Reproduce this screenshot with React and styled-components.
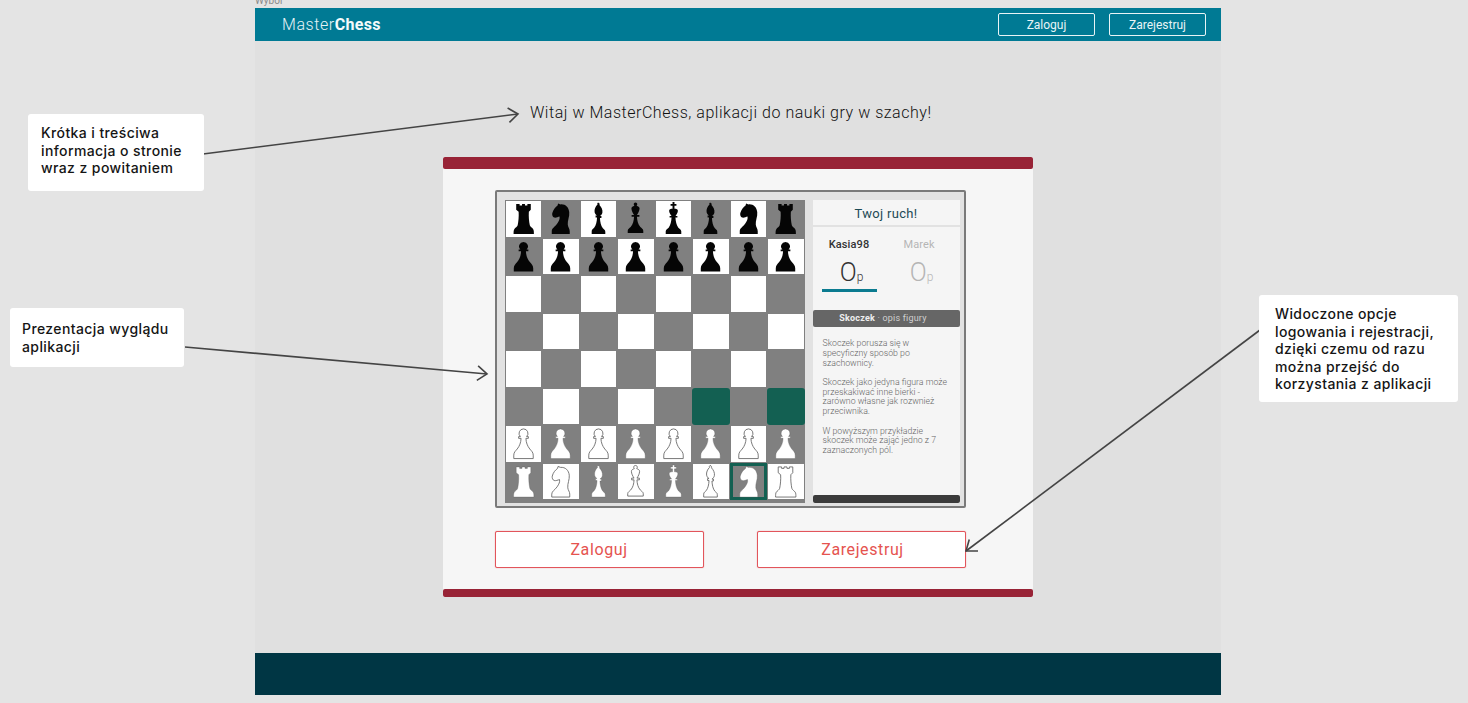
import React from 'react';
import styled, { createGlobalStyle } from 'styled-components';

const GlobalStyle = createGlobalStyle`
  html, body {
    margin: 0;
    padding: 0;
    background: #e4e4e4;
    font-family: Roboto, "Liberation Sans", sans-serif;
    overflow: hidden;
  }
`;

const Page = styled.div`
  position: relative;
  width: 1468px;
  height: 703px;
  padding: 8px 0 0 255px;
  box-sizing: border-box;
  overflow: hidden;
`;

const FrameLabel = styled.div`
  position: absolute;
  left: 255px;
  top: -5px;
  font-size: 10px;
  line-height: 12px;
  color: #8a8a8a;
`;

const Frame = styled.div`
  display: flex;
  flex-direction: column;
  width: 966px;
  height: 687px;
  background: #e0e0e0;
`;

const NavBar = styled.header`
  display: flex;
  align-items: center;
  justify-content: space-between;
  height: 33px;
  padding: 0 15px 0 27px;
  background: #007a94;
`;

const Logo = styled.div`
  font-size: 16px;
  font-weight: 300;
  letter-spacing: 0.55px;
  color: #e6f3f6;

  b {
    font-weight: 700;
    color: #f4fafb;
    letter-spacing: 0.3px;
  }
`;

const NavActions = styled.div`
  display: flex;
  gap: 14px;
`;

const NavButton = styled.button`
  width: 97px;
  height: 23px;
  padding: 0;
  border: 1px solid #e8f4f6;
  border-radius: 2px;
  background: transparent;
  color: #e8f4f6;
  font-family: inherit;
  font-size: 12px;
`;

const Main = styled.main`
  flex: 1;
  display: flex;
  flex-direction: column;
  align-items: center;
`;

const Greeting = styled.h1`
  align-self: flex-start;
  margin: 62px 0 0 275px;
  font-size: 16px;
  line-height: 20px;
  font-weight: 300;
  letter-spacing: 0.53px;
  color: #111;
`;

const Card = styled.section`
  display: flex;
  flex-direction: column;
  align-items: center;
  width: 590px;
  height: 440px;
  margin-top: 34px;
  background: #f6f6f6;
`;

const CardBar = styled.div`
  align-self: stretch;
  height: ${props => props.$height}px;
  border-radius: 2px;
  background: #982336;
`;

const GameWindow = styled.div`
  display: flex;
  gap: 8px;
  width: 471px;
  height: 318px;
  margin: 21px 16px 0 0;
  padding: 8px 4px 3px 8px;
  box-sizing: border-box;
  border: 2px solid #7a7a7a;
  border-radius: 2px;
  background: #e2e2e2;
`;

const Board = styled.div`
  display: grid;
  grid-template-columns: repeat(8, 37.5px);
  grid-template-rows: repeat(8, 37.5px);
  flex: none;
  background: #808080;
`;

const Square = styled.div`
  display: flex;
  align-items: center;
  justify-content: center;
  margin: ${props => (props.$tone === 'light' || props.$tone === 'dark' ? '1px' : '0')};
  box-sizing: border-box;
  border-radius: ${props => (props.$tone === 'target' ? '3px' : '0')};
  border: ${props => (props.$tone === 'selected' ? '3px solid #136052' : 'none')};
  background: ${props => {
    if (props.$tone === 'light') return '#ffffff';
    if (props.$tone === 'target') return '#136052';
    return 'transparent';
  }};
`;

const PieceIcon = styled.svg`
  flex: none;
  width: 35px;
  height: 35px;
  fill: ${props => (props.$white ? '#ffffff' : '#050505')};
  stroke: ${props => (props.$white ? (props.$outlined ? '#666666' : '#5a5a5a') : 'none')};
  stroke-width: ${props => (props.$white ? (props.$outlined ? 0.9 : 0.35) : 0)};
`;

const SidePanel = styled.aside`
  display: flex;
  flex-direction: column;
  width: 147px;
  background: #f5f5f5;
`;

const TurnHeader = styled.div`
  height: 25px;
  border-bottom: 2px solid #e2e2e2;
  font-size: 13px;
  line-height: 27px;
  letter-spacing: 0.3px;
  text-align: center;
  color: #1d4a55;
`;

const Players = styled.div`
  display: flex;
  gap: 15px;
  height: 83px;
  padding: 0 9px;
`;

const Player = styled.div`
  display: flex;
  flex-direction: column;
  align-items: center;
  width: 55px;
  padding-top: 11px;
  color: ${props => (props.$active ? '#333' : '#b5b5b5')};
`;

const PlayerName = styled.div`
  font-size: 11px;
  line-height: 13px;
  letter-spacing: 0.1px;
  font-weight: ${props => (props.$active ? 500 : 400)};
`;

const Score = styled.div`
  height: 31px;
  margin-top: 6px;
  padding-left: 5px;
  font-size: 25px;
  line-height: 31px;
  font-weight: 300;

  small {
    font-size: 12px;
  }
`;

const ScoreLine = styled.div`
  align-self: stretch;
  height: 2.5px;
  margin-top: 1px;
  background: ${props => (props.$active ? '#0b7b90' : 'transparent')};
`;

const InfoHeader = styled.div`
  height: 17px;
  padding-right: 6px;
  border-radius: 2px;
  background: #666666;
  font-size: 9px;
  line-height: 17px;
  letter-spacing: 0.2px;
  text-align: center;
  color: #d0d0d0;

  b {
    font-weight: 700;
    color: #eeeeee;
  }
`;

const InfoBody = styled.div`
  flex: 1;
  padding: 12px 6px 0 10px;
`;

const InfoText = styled.p`
  margin: 0 0 9.5px;
  font-size: 8.75px;
  line-height: 9.8px;
  font-weight: 300;
  color: #666;
`;

const PanelFooter = styled.div`
  height: 8px;
  border-radius: 2px;
  background: #3b3b3b;
`;

const CardActions = styled.div`
  display: flex;
  justify-content: space-between;
  width: 471px;
  margin: 23px 16px 21px 0;
`;

const OutlineButton = styled.button`
  width: 209px;
  height: 37px;
  padding: 0 0 0 ${props => props.$shift || 0}px;
  border: 1px solid #e2555b;
  border-radius: 2px;
  background: #ffffff;
  box-shadow: 0 0 1px rgba(226, 85, 91, 0.8);
  color: #e5534f;
  font-family: inherit;
  font-size: 16px;
  letter-spacing: 0.6px;
`;

const Footer = styled.footer`
  height: 42px;
  background: #003644;
`;

const ArrowLayer = styled.svg`
  position: absolute;
  left: 0;
  top: 0;
  pointer-events: none;
`;

const Note = styled.div`
  position: absolute;
  left: ${props => props.$left}px;
  top: ${props => props.$top}px;
  width: ${props => props.$width}px;
  height: ${props => props.$height}px;
  padding: ${props => props.$padY}px 0 0 ${props => props.$padX}px;
  box-sizing: border-box;
  border-radius: 3px;
  background: #ffffff;
  font-family: Inter, "Liberation Sans", sans-serif;
  font-size: 14px;
  line-height: 17.5px;
  font-weight: 500;
  letter-spacing: 0.4px;
  color: #151515;
`;

const SHAPES = {
  r: 'M10.5 3h3.500v1.500h2.500V3h3v1.500h2.500V3h3.500v6l-2 2c-.3 5 .2 10 1 14 .3 1.500 2.500 2.500 3.500 4 .7 1 .7 3 .7 5H7.800c0-2 0-4 .7-5 1-1.500 3.200-2.500 3.500-4 .8-4 1.300-9 1-14l-2.500-2z',
  n: 'M9.500 12.500C10.500 8.500 13 6 15 4.500L15.500 2.500L18 3.500C23 3 26.500 6.500 27 11.500C27.500 16 25 20 25.500 24.500C25.800 27 27.500 28.500 27.500 31V34H9V31C9 28 12.500 26.500 14.500 23.500C16.500 20.500 17.500 18.500 17 16C15.500 16.500 13 17.500 11.500 17C10 16.500 9.200 14.500 9.500 12.500z',
  b: 'M18 2c1 0 1.500 1 1 2 2 2 3.500 5 3 8-.3 1.500-1.500 3-2.500 3.500H21v2h-1.500c.2 4 1 8 3 10.500 1 1.200 2.500 1.500 2.500 3.500v2.500H11V31c0-2 1.500-2.300 2.500-3.500 2-2.500 2.800-6.500 3-10.500H15v-2h1.500c-1-.5-2.200-2-2.500-3.500-.5-3 1-6 3-8-.5-1 0-2 1-2z',
  q: 'M18 1.500c1.300 0 2 1 1.800 2.200-.1.500-.3.800-.6 1.100 1.500.5 3 1.200 3 2.700 0 2.500-1.400 5-2.700 7H22v1.800h-2.500c.2 4 1 7.700 3.500 10.500 1.200 1.300 3 2 3 3.700v2.500H10v-2.500c0-1.700 1.800-2.400 3-3.700 2.500-2.800 3.300-6.500 3.500-10.500H14v-1.800h2.500c-1.300-2-2.700-4.500-2.700-7 0-1.500 1.500-2.200 3-2.700-.3-.3-.5-.6-.6-1.100-.2-1.200.5-2.200 1.800-2.200z',
  k: 'M17 1h2v2h2v2h-2v3c2 0 3.500.5 3.500 2 0 2-1.500 4-2.500 5.500h2V17h-2c.2 4 1 7.800 3 10.500 1 1.200 3 2 3 3.500v3H10v-3c0-1.500 2-2.300 3-3.500 2-2.700 2.800-6.500 3-10.500h-2v-1.500h2c-1-1.500-2.500-3.500-2.500-5.500 0-1.500 1.500-2 3.500-2V5h-2V3h2z',
  p: 'M18 3a4.600 4.600 0 0 1 3.200 7.900H23v1.800h-2.500c.2 4.500 1.500 7.800 4 11 1.500 1.800 3.500 3.300 3.500 6.300v3.500H8V30c0-3 2-4.500 3.500-6.300 2.500-3.200 3.800-6.500 4-11H13v-1.800h1.800A4.600 4.600 0 0 1 18 3z',
};

const BACK_RANK = ['r', 'n', 'b', 'q', 'k', 'b', 'n', 'r'];
const PAWNS = ['p', 'p', 'p', 'p', 'p', 'p', 'p', 'p'];
const ROWS = [BACK_RANK, PAWNS, [], [], [], [], PAWNS, BACK_RANK];
const TARGETS = ['5-5', '5-7'];
const SELECTED = '7-6';

const Piece = ({ type, white, outlined }) => (
  <PieceIcon viewBox="0 0 36 36" $white={white} $outlined={outlined}>
    <path d={SHAPES[type]} />
  </PieceIcon>
);

const squareTone = (row, col) => {
  const key = `${row}-${col}`;
  if (TARGETS.includes(key)) return 'target';
  if (key === SELECTED) return 'selected';
  return (row + col) % 2 === 0 ? 'light' : 'dark';
};

const ChessBoard = () => (
  <Board>
    {ROWS.flatMap((pieces, row) =>
      Array.from({ length: 8 }, (_, col) => {
        const tone = squareTone(row, col);
        return (
          <Square key={`${row}-${col}`} $tone={tone}>
            {pieces[col] && (
              <Piece type={pieces[col]} white={row > 3} outlined={tone === 'light'} />
            )}
          </Square>
        );
      })
    )}
  </Board>
);

const Arrow = ({ x1, y1, x2, y2 }) => {
  const angle = Math.atan2(y2 - y1, x2 - x1);
  const wing = delta => {
    const a = angle + delta;
    return `${x2 - 12 * Math.cos(a)} ${y2 - 12 * Math.sin(a)}`;
  };
  return (
    <g fill="none" stroke="#444444" strokeWidth="1.6">
      <path d={`M${x1} ${y1}L${x2} ${y2}`} />
      <path d={`M${wing(0.65)}L${x2} ${y2}L${wing(-0.65)}`} />
    </g>
  );
};

export default function App() {
  return (
    <Page>
      <GlobalStyle />
      <FrameLabel>Wybór</FrameLabel>
      <Frame>
        <NavBar>
          <Logo>Master<b>Chess</b></Logo>
          <NavActions>
            <NavButton>Zaloguj</NavButton>
            <NavButton>Zarejestruj</NavButton>
          </NavActions>
        </NavBar>
        <Main>
          <Greeting>Witaj w MasterChess, aplikacji do nauki gry w szachy!</Greeting>
          <Card>
            <CardBar $height={12} />
            <GameWindow>
              <ChessBoard />
              <SidePanel>
                <TurnHeader>Twoj ruch!</TurnHeader>
                <Players>
                  <Player $active>
                    <PlayerName $active>Kasia98</PlayerName>
                    <Score>O<small>p</small></Score>
                    <ScoreLine $active />
                  </Player>
                  <Player>
                    <PlayerName>Marek</PlayerName>
                    <Score>O<small>p</small></Score>
                    <ScoreLine />
                  </Player>
                </Players>
                <InfoHeader><b>Skoczek</b> · opis figury</InfoHeader>
                <InfoBody>
                  <InfoText>Skoczek porusza się w<br />specyficzny sposób po<br />szachownicy.</InfoText>
                  <InfoText>Skoczek jako jedyna figura może<br />przeskakiwać inne bierki -<br />zarówno własne jak rozwnież<br />przeciwnika.</InfoText>
                  <InfoText>W powyższym przykładzie<br />skoczek może zająć jedno z 7<br />zaznaczonych pól.</InfoText>
                </InfoBody>
                <PanelFooter />
              </SidePanel>
            </GameWindow>
            <CardActions>
              <OutlineButton>Zaloguj</OutlineButton>
              <OutlineButton $shift={3}>Zarejestruj</OutlineButton>
            </CardActions>
            <CardBar $height={8} />
          </Card>
        </Main>
        <Footer />
      </Frame>
      <ArrowLayer width="1468" height="703">
        <Arrow x1={203} y1={154} x2={518} y2={114} />
        <Arrow x1={185} y1={347} x2={487} y2={374} />
        <Arrow x1={1260} y1={330} x2={966} y2={551} />
      </ArrowLayer>
      <Note $left={28} $top={114} $width={176} $height={77} $padX={13} $padY={10}>
        Krótka i treściwa<br />informacja o stronie<br />wraz z powitaniem
      </Note>
      <Note $left={10} $top={308} $width={174} $height={59} $padX={12} $padY={12}>
        Prezentacja wyglądu<br />aplikacji
      </Note>
      <Note $left={1259} $top={295} $width={199} $height={107} $padX={16} $padY={10}>
        Widoczone opcje<br />logowania i rejestracji,<br />dzięki czemu od razu<br />można przejść do<br />korzystania z aplikacji
      </Note>
    </Page>
  );
}
